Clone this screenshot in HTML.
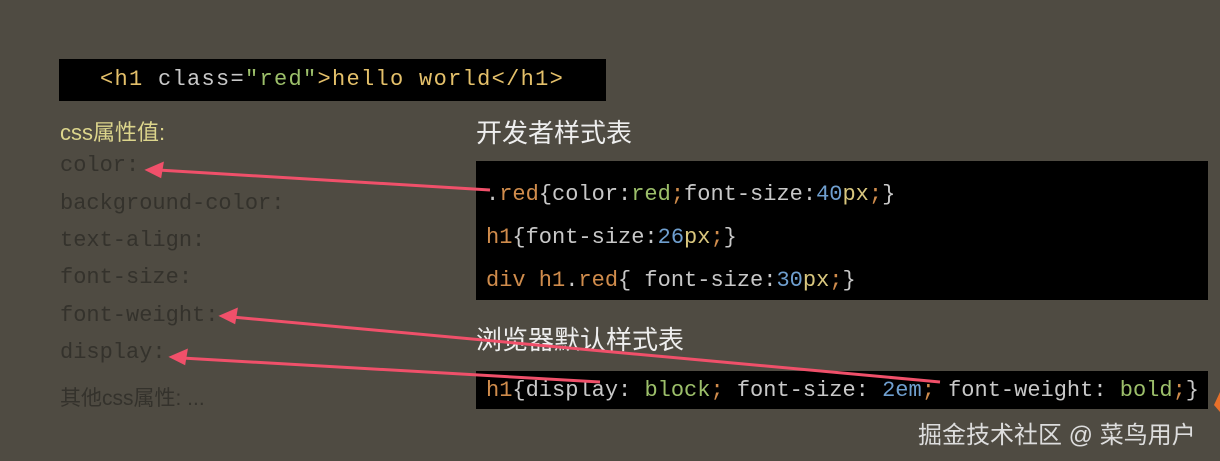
<html><head><style>
body{margin:0;width:1220px;height:461px;background:#4f4b42;position:relative;overflow:hidden;font-family:"Liberation Mono","Noto Sans CJK SC",monospace}
.a{position:absolute;white-space:pre}
.box{position:absolute;background:#000}
.m{font-size:22px}
.g{color:#34322c}
.y{color:#e4c06a}.w{color:#c8c8c8}.gr{color:#9cbf6a}.o{color:#d08c4c}.b{color:#6f9fcf}.p{color:#d9c77e}
.cn{font-family:"Liberation Sans","Noto Sans CJK SC",sans-serif}
</style></head><body>
<div class="box" style="left:59px;top:59px;width:547px;height:42px"></div>
<div class="a" style="left:100px;top:67px;font-size:22px;letter-spacing:1.3px"><span class="y">&lt;h1 </span><span class="w">class=</span><span class="gr">"red"</span><span class="y">&gt;hello world&lt;/h1&gt;</span></div>
<div class="a cn" style="left:60px;top:115px;font-size:22px;color:#dcd58c">css属性值:</div>
<div class="a m g" style="left:60px;top:153px">color:</div>
<div class="a m g" style="left:60px;top:191px">background-color:</div>
<div class="a m g" style="left:60px;top:228px">text-align:</div>
<div class="a m g" style="left:60px;top:265px">font-size:</div>
<div class="a m g" style="left:60px;top:303px">font-weight:</div>
<div class="a m g" style="left:60px;top:340px">display:</div>
<div class="a cn g" style="left:60px;top:382px;font-size:21px">其他css属性: ...</div>
<div class="a cn" style="left:476px;top:113px;font-size:26px;color:#eee">开发者样式表</div>
<div class="box" style="left:476px;top:161px;width:732px;height:139px"></div>
<div class="a m" style="left:486px;top:182px"><span class="w">.</span><span class="o">red</span><span class="w">{color:</span><span class="gr">red</span><span class="o">;</span><span class="w">font-size:</span><span class="b">40</span><span class="p">px</span><span class="o">;</span><span class="w">}</span></div>
<div class="a m" style="left:486px;top:225px"><span class="o">h1</span><span class="w">{font-size:</span><span class="b">26</span><span class="p">px</span><span class="o">;</span><span class="w">}</span></div>
<div class="a m" style="left:486px;top:268px"><span class="o">div h1</span><span class="w">.</span><span class="o">red</span><span class="w">{ font-size:</span><span class="b">30</span><span class="p">px</span><span class="o">;</span><span class="w">}</span></div>
<div class="a cn" style="left:476px;top:320px;font-size:26px;color:#eee">浏览器默认样式表</div>
<div class="box" style="left:476px;top:371px;width:732px;height:38px"></div>
<div class="a m" style="left:486px;top:378px"><span class="o">h1</span><span class="w">{display: </span><span class="gr">block</span><span class="o">;</span><span class="w"> font-size: </span><span class="b">2em</span><span class="o">;</span><span class="w"> font-weight: </span><span class="gr">bold</span><span class="o">;</span><span class="w">}</span></div>
<div class="a cn" style="left:918px;top:415px;font-size:24px;color:#ddd">掘金技术社区 @ 菜鸟用户</div>
<svg class="a" style="left:0;top:0" width="1220" height="461">
<g stroke="#f0506a" stroke-width="3" fill="#f0506a">
<line x1="490" y1="190" x2="158" y2="170"/><polygon points="148,170 162,164 160,176"/>
<line x1="940" y1="382" x2="232" y2="317"/><polygon points="222,316 236,310 234,322"/>
<line x1="600" y1="382" x2="182" y2="358"/><polygon points="172,357 186,351 184,363"/>
</g>
<polygon points="1214,405 1220,392 1220,412" fill="#e8702a"/>
</svg>
</body></html>
